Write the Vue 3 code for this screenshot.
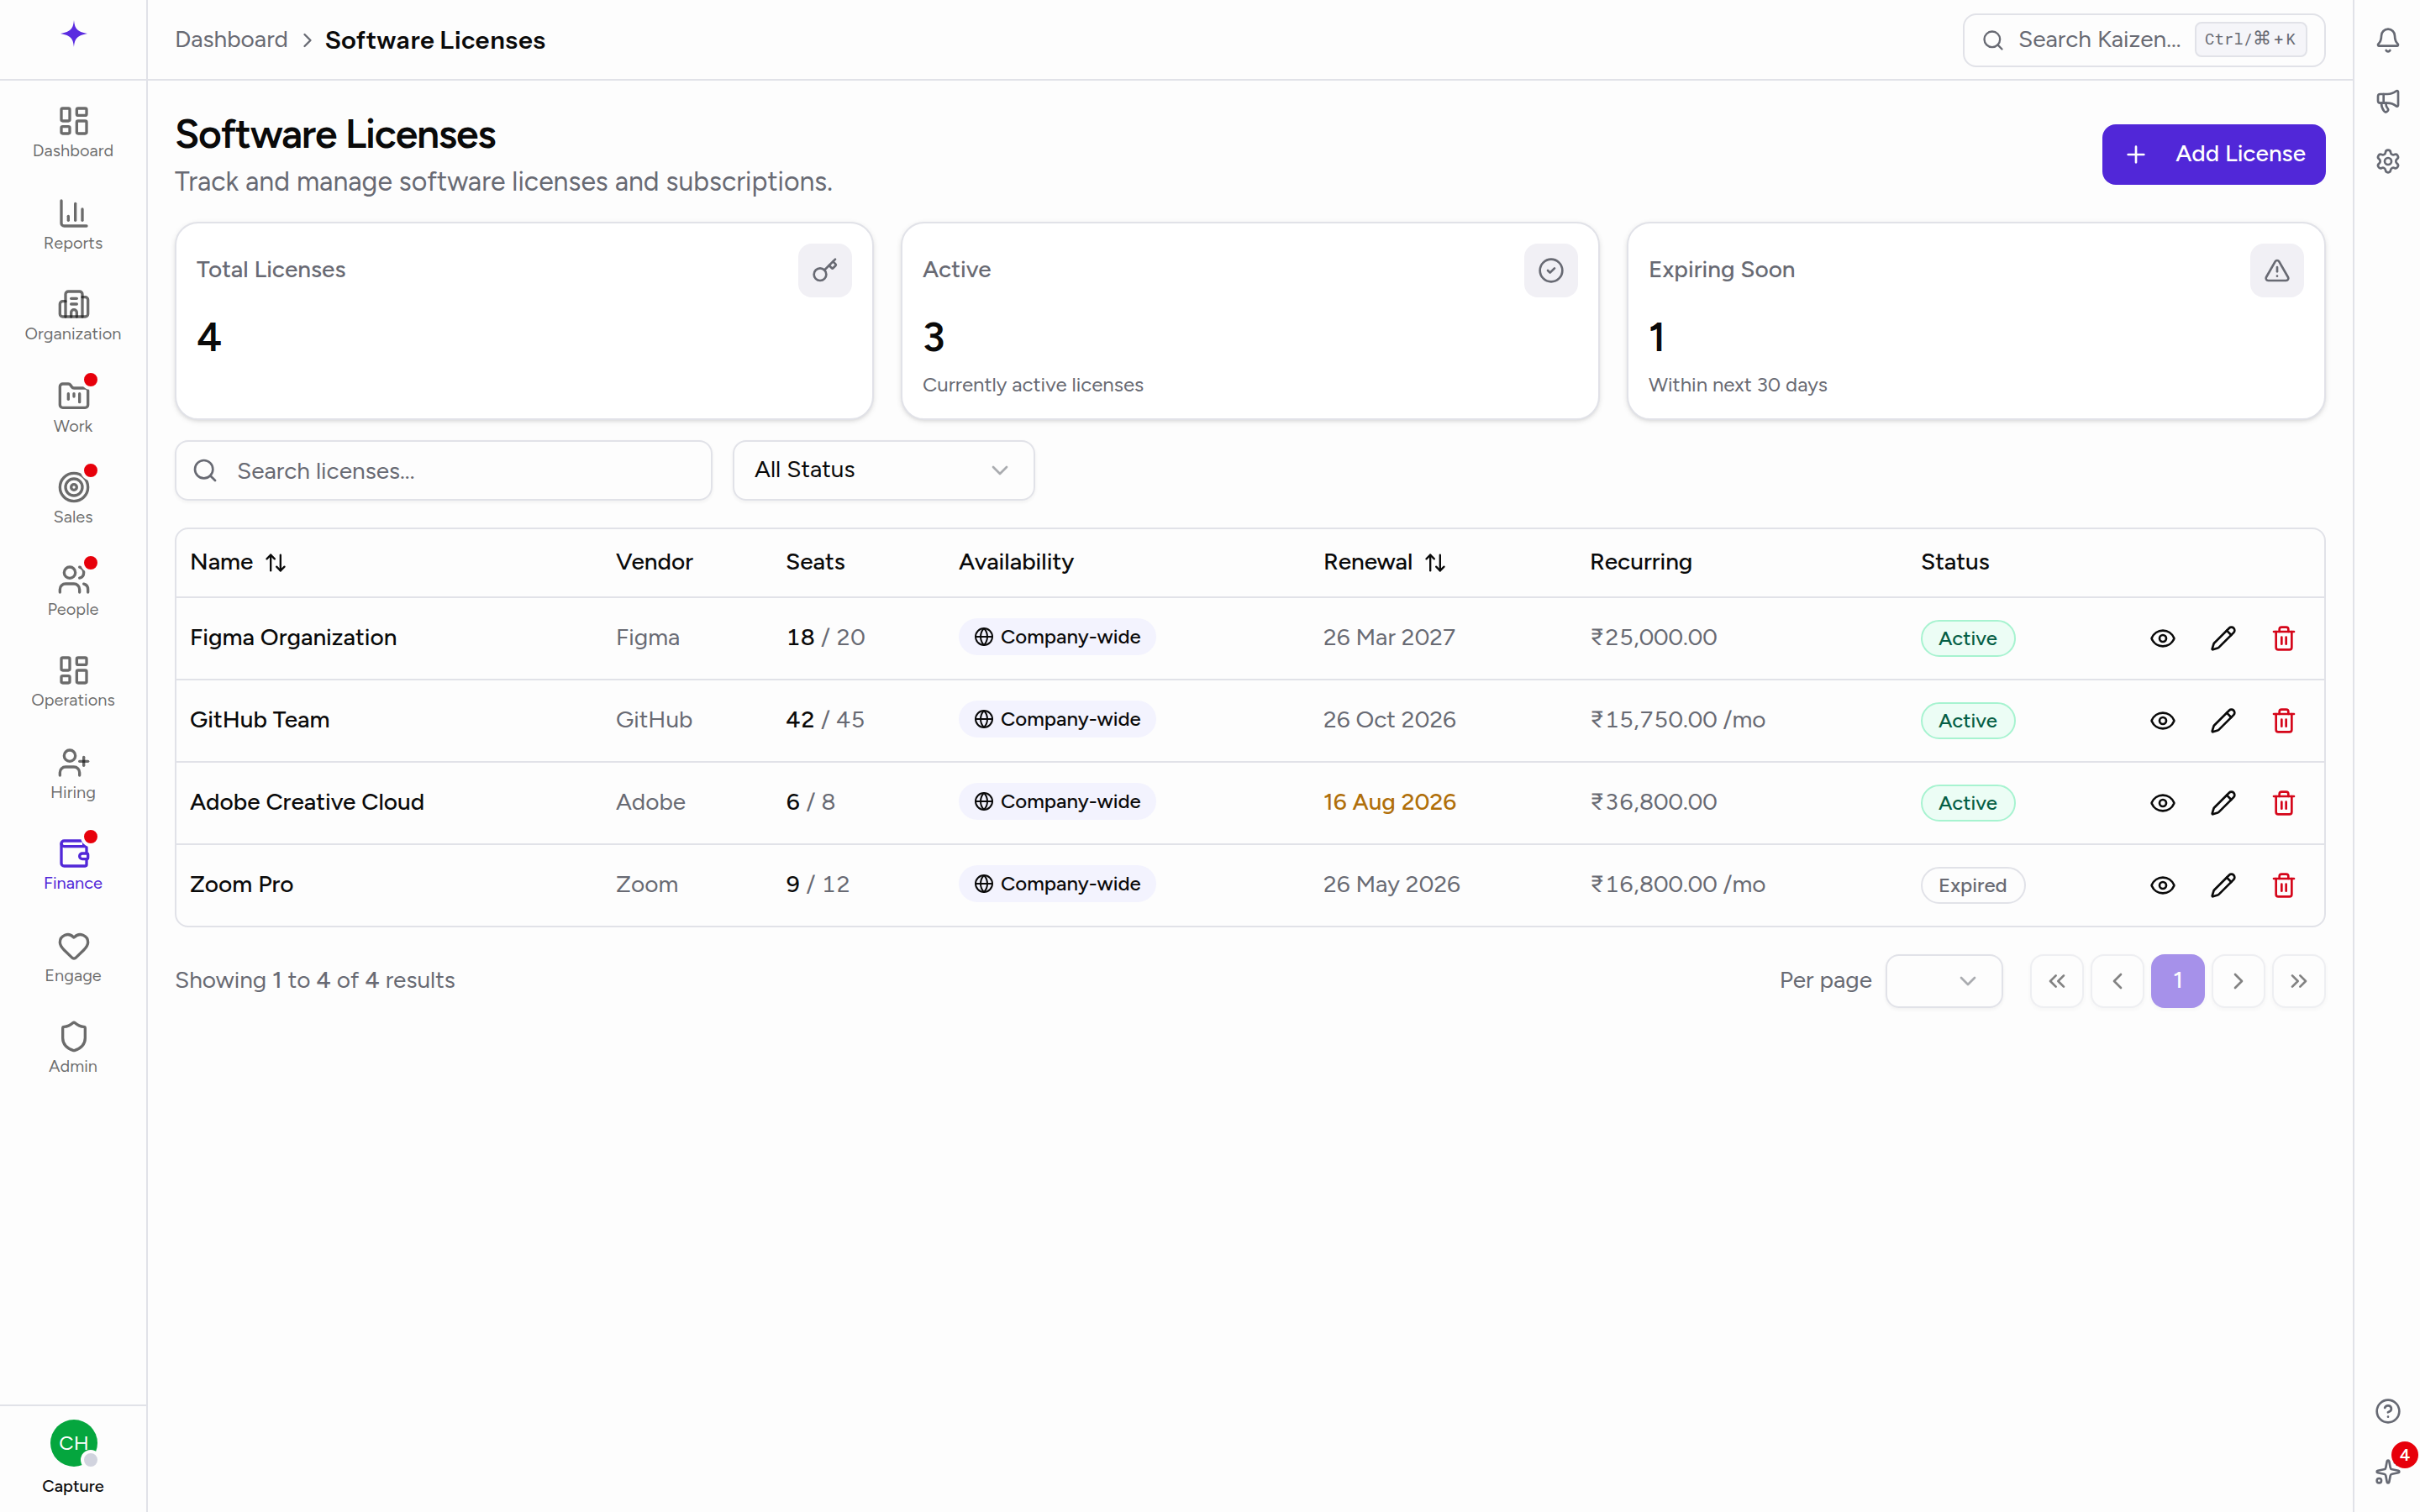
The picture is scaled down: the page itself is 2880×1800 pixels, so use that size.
<template>
  <div class="app">
    <!-- Sidebar -->
    <aside class="sidebar">
      <div class="brand">
        <svg class="brand-icon" viewBox="0 0 32 32">
          <path d="M16 0C17 10 19.500 13.600 32 16C19.500 18.400 17 22 16 32C15 22 12.500 18.400 0 16C12.500 13.600 15 10 16 0Z" />
        </svg>
      </div>

      <nav class="menu">
        <a v-for="item in menu" :key="item.label" class="menu-item" :class="{ active: item.active }">
          <span class="menu-icon">
            <svg class="icon" viewBox="0 0 24 24"><path v-for="d in icons[item.icon]" :key="d" :d="d" /></svg>
            <span v-if="item.dot" class="menu-dot"></span>
          </span>
          <span class="menu-label">{{ item.label }}</span>
        </a>
      </nav>

      <div class="user">
        <div class="avatar">
          <span>CH</span>
          <span class="presence"></span>
        </div>
        <span class="user-name">Capture</span>
      </div>
    </aside>

    <main class="main">
      <!-- Top bar -->
      <header class="topbar">
        <div class="breadcrumb">
          <span class="crumb">Dashboard</span>
          <svg class="icon crumb-sep" viewBox="0 0 24 24"><path d="m9 18 6-6-6-6" /></svg>
          <span class="crumb-current">Software Licenses</span>
        </div>
        <div class="global-search">
          <svg class="icon" viewBox="0 0 24 24"><path v-for="d in icons.search" :key="d" :d="d" /></svg>
          <span class="global-search-text">Search Kaizen...</span>
          <kbd class="kbd"><span>Ctrl/</span><span class="cmd">⌘</span><span class="plus">+</span><span>K</span></kbd>
        </div>
      </header>

      <section class="content">
        <div class="page-head">
          <div>
            <h1 class="title">Software Licenses</h1>
            <p class="subtitle">Track and manage software licenses and subscriptions.</p>
          </div>
          <button class="btn-primary">
            <svg class="icon" viewBox="0 0 24 24"><path d="M5 12h14M12 5v14" /></svg>
            <span>Add License</span>
          </button>
        </div>

        <!-- Summary cards -->
        <div class="cards">
          <div v-for="card in cards" :key="card.label" class="card">
            <div class="card-head">
              <span class="card-label">{{ card.label }}</span>
              <span class="card-icon">
                <svg class="icon" viewBox="0 0 24 24"><path v-for="d in icons[card.icon]" :key="d" :d="d" /></svg>
              </span>
            </div>
            <div class="card-value">{{ card.value }}</div>
            <div v-if="card.hint" class="card-hint">{{ card.hint }}</div>
          </div>
        </div>

        <!-- Filters -->
        <div class="filters">
          <div class="search-box">
            <svg class="icon" viewBox="0 0 24 24"><path v-for="d in icons.search" :key="d" :d="d" /></svg>
            <span>Search licenses...</span>
          </div>
          <div class="select status-select">
            <span>All Status</span>
            <svg class="icon chevron" viewBox="0 0 24 24"><path d="m6 9 6 6 6-6" /></svg>
          </div>
        </div>

        <!-- Licenses table -->
        <div class="table">
          <div class="row row-head">
            <div v-for="col in columns" :key="col.label" class="cell">
              <span>{{ col.label }}</span>
              <svg v-if="col.sortable" class="icon sort" viewBox="0 0 24 24">
                <path d="m21 16-4 4-4-4" /><path d="M17 20V4" /><path d="m3 8 4-4 4 4" /><path d="M7 4v16" />
              </svg>
            </div>
          </div>
          <div v-for="item in licenses" :key="item.name" class="row">
            <div class="cell name">{{ item.name }}</div>
            <div class="cell muted">{{ item.vendor }}</div>
            <div class="cell muted tabular">
              <span><span class="used">{{ item.used }}</span> / {{ item.seats }}</span>
            </div>
            <div class="cell">
              <span class="pill">
                <svg class="icon" viewBox="0 0 24 24"><path v-for="d in icons.globe" :key="d" :d="d" /></svg>
                <span>Company-wide</span>
              </span>
            </div>
            <div class="cell muted" :class="{ warn: item.soon }">{{ item.renewal }}</div>
            <div class="cell muted tabular">{{ item.price }}</div>
            <div class="cell cell-status">
              <span class="badge" :class="item.status.toLowerCase()">{{ item.status }}</span>
            </div>
            <div class="cell actions">
              <svg class="icon" viewBox="0 0 24 24"><path v-for="d in icons.eye" :key="d" :d="d" /></svg>
              <svg class="icon" viewBox="0 0 24 24"><path v-for="d in icons.pencil" :key="d" :d="d" /></svg>
              <svg class="icon danger" viewBox="0 0 24 24"><path v-for="d in icons.trash" :key="d" :d="d" /></svg>
            </div>
          </div>
        </div>

        <!-- Pagination -->
        <div class="pagination">
          <div class="showing">Showing <b>1</b> to <b>4</b> of <b>4</b> results</div>
          <div class="pager">
            <span class="per-page">Per page</span>
            <div class="select page-select">
              <svg class="icon chevron" viewBox="0 0 24 24"><path d="m6 9 6 6 6-6" /></svg>
            </div>
            <div class="pages">
              <button class="page-btn"><svg class="icon" viewBox="0 0 24 24"><path d="m11 17-5-5 5-5" /><path d="m18 17-5-5 5-5" /></svg></button>
              <button class="page-btn"><svg class="icon" viewBox="0 0 24 24"><path d="m15 18-6-6 6-6" /></svg></button>
              <button class="page-btn current">1</button>
              <button class="page-btn"><svg class="icon" viewBox="0 0 24 24"><path d="m9 18 6-6-6-6" /></svg></button>
              <button class="page-btn"><svg class="icon" viewBox="0 0 24 24"><path d="m6 17 5-5-5-5" /><path d="m13 17 5-5-5-5" /></svg></button>
            </div>
          </div>
        </div>
      </section>
    </main>

    <!-- Right rail -->
    <aside class="rail">
      <div class="rail-group">
        <svg v-for="name in railIcons" :key="name" class="icon" viewBox="0 0 24 24">
          <path v-for="d in icons[name]" :key="d" :d="d" />
        </svg>
      </div>
      <div class="rail-group">
        <svg class="icon" viewBox="0 0 24 24"><path v-for="d in icons.help" :key="d" :d="d" /></svg>
        <span class="assistant">
          <svg class="icon" viewBox="0 0 24 24"><path v-for="d in icons.sparkles" :key="d" :d="d" /></svg>
          <span class="count">4</span>
        </span>
      </div>
    </aside>
  </div>
</template>

<script setup>
const circle = (x, y, r) => `M${x - r} ${y}a${r} ${r} 0 1 0 ${r * 2} 0a${r} ${r} 0 1 0 ${-r * 2} 0`

const icons = {
  grid: [
    'M4 3h4a1 1 0 0 1 1 1v7a1 1 0 0 1-1 1H4a1 1 0 0 1-1-1V4a1 1 0 0 1 1-1z',
    'M15 3h5a1 1 0 0 1 1 1v3a1 1 0 0 1-1 1h-5a1 1 0 0 1-1-1V4a1 1 0 0 1 1-1z',
    'M15 12h5a1 1 0 0 1 1 1v7a1 1 0 0 1-1 1h-5a1 1 0 0 1-1-1v-7a1 1 0 0 1 1-1z',
    'M4 16h4a1 1 0 0 1 1 1v3a1 1 0 0 1-1 1H4a1 1 0 0 1-1-1v-3a1 1 0 0 1 1-1z',
  ],
  chart: ['M3 3v16a2 2 0 0 0 2 2h16', 'M18 17V9', 'M13 17V5', 'M8 17v-3'],
  building: [
    'M10 12h4', 'M10 8h4', 'M14 21v-3a2 2 0 0 0-4 0v3',
    'M6 10H4a2 2 0 0 0-2 2v7a2 2 0 0 0 2 2h16a2 2 0 0 0 2-2V9a2 2 0 0 0-2-2h-2',
    'M6 21V5a2 2 0 0 1 2-2h8a2 2 0 0 1 2 2v16',
  ],
  folder: [
    'M4 20h16a2 2 0 0 0 2-2V8a2 2 0 0 0-2-2h-7.93a2 2 0 0 1-1.66-.9l-.82-1.2A2 2 0 0 0 7.930 3H4a2 2 0 0 0-2 2v13c0 1.100.9 2 2 2Z',
    'M8 10v4', 'M12 10v2', 'M16 10v6',
  ],
  target: [circle(12, 12, 10), circle(12, 12, 6), circle(12, 12, 2)],
  users: ['M16 21v-2a4 4 0 0 0-4-4H6a4 4 0 0 0-4 4v2', 'M16 3.128a4 4 0 0 1 0 7.744', 'M22 21v-2a4 4 0 0 0-3-3.870', circle(9, 7, 4)],
  userPlus: ['M16 21v-2a4 4 0 0 0-4-4H6a4 4 0 0 0-4 4v2', circle(9, 7, 4), 'M19 8v6', 'M22 11h-6'],
  wallet: [
    'M19 7V4a1 1 0 0 0-1-1H5a2 2 0 0 0 0 4h15a1 1 0 0 1 1 1v4h-3a2 2 0 0 0 0 4h3a1 1 0 0 0 1-1v-2a1 1 0 0 0-1-1',
    'M3 5v14a2 2 0 0 0 2 2h15a1 1 0 0 0 1-1v-4',
  ],
  heart: ['M2 9.500a5.500 5.500 0 0 1 9.591-3.676.560.560 0 0 0 .818 0A5.490 5.490 0 0 1 22 9.500c0 2.290-1.500 4-3 5.500l-5.492 5.313a2 2 0 0 1-3 .019L5 15c-1.500-1.500-3-3.200-3-5.500'],
  shield: ['M20 13c0 5-3.500 7.500-7.660 8.950a1 1 0 0 1-.67-.01C7.500 20.500 4 18 4 13V6a1 1 0 0 1 1-1c2 0 4.500-1.200 6.240-2.720a1.170 1.170 0 0 1 1.520 0C14.510 3.810 17 5 19 5a1 1 0 0 1 1 1z'],
  search: ['m21 21-4.340-4.340', circle(11, 11, 8)],
  key: ['m15.500 7.500 2.300 2.300a1 1 0 0 0 1.400 0l2.100-2.100a1 1 0 0 0 0-1.400L19 4', 'm21 2-9.600 9.600', circle(7.5, 15.5, 5.5)],
  check: [circle(12, 12, 10), 'm9 12 2 2 4-4'],
  alert: ['m21.730 18-8-14a2 2 0 0 0-3.480 0l-8 14A2 2 0 0 0 4 21h16a2 2 0 0 0 1.730-3', 'M12 9v4', 'M12 17h.01'],
  globe: [circle(12, 12, 10), 'M12 2a14.500 14.500 0 0 0 0 20 14.500 14.500 0 0 0 0-20', 'M2 12h20'],
  eye: ['M2.062 12.348a1 1 0 0 1 0-.696 10.750 10.750 0 0 1 19.876 0 1 1 0 0 1 0 .696 10.750 10.750 0 0 1-19.876 0', circle(12, 12, 3)],
  pencil: [
    'M21.174 6.812a1 1 0 0 0-3.986-3.987L3.842 16.174a2 2 0 0 0-.5.830l-1.321 4.352a.5.5 0 0 0 .623.622l4.353-1.320a2 2 0 0 0 .830-.497z',
    'm15 5 4 4',
  ],
  trash: ['M10 11v6', 'M14 11v6', 'M19 6v14a2 2 0 0 1-2 2H7a2 2 0 0 1-2-2V6', 'M3 6h18', 'M8 6V4a2 2 0 0 1 2-2h4a2 2 0 0 1 2 2v2'],
  bell: [
    'M10.268 21a2 2 0 0 0 3.464 0',
    'M3.262 15.326A1 1 0 0 0 4 17h16a1 1 0 0 0 .740-1.673C19.410 13.956 18 12.499 18 8A6 6 0 0 0 6 8c0 4.499-1.411 5.956-2.738 7.326',
  ],
  megaphone: [
    'M11 6a13 13 0 0 0 8.400-2.800A1 1 0 0 1 21 4v12a1 1 0 0 1-1.600.8A13 13 0 0 0 11 14H5a2 2 0 0 1-2-2V8a2 2 0 0 1 2-2z',
    'M6 14a12 12 0 0 0 2.400 7.200 2 2 0 0 0 3.200-2.400A8 8 0 0 1 10 14', 'M8 6v8',
  ],
  settings: [
    'M9.671 4.136a2.340 2.340 0 0 1 4.659 0 2.340 2.340 0 0 0 3.319 1.915 2.340 2.340 0 0 1 2.330 4.033 2.340 2.340 0 0 0 0 3.831 2.340 2.340 0 0 1-2.330 4.033 2.340 2.340 0 0 0-3.319 1.915 2.340 2.340 0 0 1-4.659 0 2.340 2.340 0 0 0-3.320-1.915 2.340 2.340 0 0 1-2.330-4.033 2.340 2.340 0 0 0 0-3.831A2.340 2.340 0 0 1 6.350 6.051a2.340 2.340 0 0 0 3.319-1.915',
    circle(12, 12, 3),
  ],
  help: [circle(12, 12, 10), 'M9.090 9a3 3 0 0 1 5.830 1c0 2-3 3-3 3', 'M12 17h.01'],
  sparkles: [
    'M11.017 2.814a1 1 0 0 1 1.966 0l1.051 5.558a2 2 0 0 0 1.594 1.594l5.558 1.051a1 1 0 0 1 0 1.966l-5.558 1.051a2 2 0 0 0-1.594 1.594l-1.051 5.558a1 1 0 0 1-1.966 0l-1.051-5.558a2 2 0 0 0-1.594-1.594l-5.558-1.051a1 1 0 0 1 0-1.966l5.558-1.051a2 2 0 0 0 1.594-1.594z',
    'M20 2v4', 'M22 4h-4', circle(4, 20, 2),
  ],
}

const railIcons = ['bell', 'megaphone', 'settings']

const menu = [
  { label: 'Dashboard', icon: 'grid' },
  { label: 'Reports', icon: 'chart' },
  { label: 'Organization', icon: 'building' },
  { label: 'Work', icon: 'folder', dot: true },
  { label: 'Sales', icon: 'target', dot: true },
  { label: 'People', icon: 'users', dot: true },
  { label: 'Operations', icon: 'grid' },
  { label: 'Hiring', icon: 'userPlus' },
  { label: 'Finance', icon: 'wallet', dot: true, active: true },
  { label: 'Engage', icon: 'heart' },
  { label: 'Admin', icon: 'shield' },
]

const cards = [
  { label: 'Total Licenses', value: 4, icon: 'key' },
  { label: 'Active', value: 3, icon: 'check', hint: 'Currently active licenses' },
  { label: 'Expiring Soon', value: 1, icon: 'alert', hint: 'Within next 30 days' },
]

const columns = [
  { label: 'Name', sortable: true },
  { label: 'Vendor' },
  { label: 'Seats' },
  { label: 'Availability' },
  { label: 'Renewal', sortable: true },
  { label: 'Recurring' },
  { label: 'Status' },
]

const licenses = [
  { name: 'Figma Organization', vendor: 'Figma', used: 18, seats: 20, renewal: '26 Mar 2027', price: '₹25,000.00', status: 'Active' },
  { name: 'GitHub Team', vendor: 'GitHub', used: 42, seats: 45, renewal: '26 Oct 2026', price: '₹15,750.00 /mo', status: 'Active' },
  { name: 'Adobe Creative Cloud', vendor: 'Adobe', used: 6, seats: 8, renewal: '16 Aug 2026', price: '₹36,800.00', status: 'Active', soon: true },
  { name: 'Zoom Pro', vendor: 'Zoom', used: 9, seats: 12, renewal: '26 May 2026', price: '₹16,800.00 /mo', status: 'Expired' },
]
</script>

<style>
body {
  background: #fdfdfd;
}
</style>

<style scoped>
.app {
  display: flex;
  width: 2880px;
  height: 1800px;
  overflow: hidden;
  background: #fdfdfd;
  color: #0a0a0a;
  font-family: Figtree, Lato, 'Open Sans', sans-serif;
  font-size: 28px;
  line-height: 40px;
}

.app * {
  box-sizing: border-box;
}

.icon {
  width: 32px;
  height: 32px;
  flex: none;
  fill: none;
  stroke: currentColor;
  stroke-width: 2;
  stroke-linecap: round;
  stroke-linejoin: round;
}

/* SIDEBAR */
.sidebar {
  display: flex;
  flex-direction: column;
  flex: none;
  width: 176px;
  border-right: 2px solid #e1e2e8;
}

.brand {
  display: flex;
  justify-content: center;
  height: 96px;
  padding: 24px 0 0 2px;
  border-bottom: 2px solid #e1e2e8;
}

.brand-icon {
  width: 32px;
  height: 32px;
  fill: #5a2be0;
}

.menu {
  display: flex;
  flex-direction: column;
  flex: 1;
  padding-top: 28px;
}

.menu-item {
  display: flex;
  flex-direction: column;
  align-items: center;
  gap: 2px;
  height: 110px;
  color: rgba(10, 10, 10, 0.6);
}

.menu-item:nth-child(even) {
  height: 108px;
}

.menu-item.active {
  color: #5127d8;
}

.menu-icon {
  position: relative;
  height: 40px;
  margin-left: 2px;
}

.menu-icon .icon {
  width: 40px;
  height: 40px;
}

.menu-dot {
  position: absolute;
  top: -12px;
  right: -12px;
  width: 24px;
  height: 24px;
  border: 4px solid #fdfdfd;
  border-radius: 50%;
  background: #e7000b;
}

.menu-label {
  font-size: 20px;
  line-height: 26px;
}

.user {
  display: flex;
  flex-direction: column;
  align-items: center;
  gap: 10px;
  height: 128px;
  padding-top: 16px;
  border-top: 2px solid #e1e2e8;
}

.avatar {
  position: relative;
  display: flex;
  align-items: center;
  justify-content: center;
  width: 56px;
  height: 56px;
  margin-left: 2px;
  border-radius: 50%;
  background: #05a63e;
  color: #fff;
  font-size: 24px;
}

.presence {
  position: absolute;
  right: -4px;
  bottom: -4px;
  width: 24px;
  height: 24px;
  border: 4px solid #fdfdfd;
  border-radius: 50%;
  background: #d1d3de;
}

.user-name {
  font-size: 20px;
  line-height: 26px;
  font-weight: 500;
}

/* MAIN */
.main {
  flex: 1;
  min-width: 0;
}

.topbar {
  display: flex;
  align-items: center;
  justify-content: space-between;
  height: 96px;
  padding: 2px 32px 0;
  border-bottom: 2px solid #e1e2e8;
}

.breadcrumb {
  display: flex;
  align-items: center;
}

.crumb {
  padding-bottom: 4px;
  color: #686a73;
}

.crumb-sep {
  width: 28px;
  height: 28px;
  margin: 0 7px 0 9px;
  color: #686a73;
}

.crumb-current {
  font-family: 'Instrument Sans', Figtree, sans-serif;
  font-size: 29px;
  font-weight: 600;
  letter-spacing: 0.75px;
}

.global-search {
  display: flex;
  align-items: center;
  width: 432px;
  height: 64px;
  padding: 0 20px;
  border: 2px solid #e1e2e8;
  border-radius: 16px;
  color: #686a73;
}

.global-search .icon {
  width: 28px;
  height: 28px;
}

.global-search-text {
  flex: 1;
  padding: 0 0 4px 16px;
}

.kbd {
  display: flex;
  align-items: center;
  width: 134px;
  height: 42px;
  margin-top: -2px;
  padding: 0 0 2px 10px;
  border: 2px solid #e1e2e8;
  border-radius: 8px;
  background: #f5f5f9;
  font: 19px/26px 'Roboto Mono', 'DejaVu Sans Mono', monospace;
}

.cmd {
  width: 20px;
  font: 22px/26px 'DejaVu Sans', sans-serif;
  text-align: center;
}

.plus {
  margin: 0 3px 0 5px;
}

.content {
  padding: 32px;
}

.page-head {
  display: flex;
  align-items: center;
  justify-content: space-between;
  height: 112px;
}

.title {
  margin: -1px 0 1px;
  font-size: 48px;
  line-height: 64px;
  font-weight: 600;
  letter-spacing: -1.2px;
}

.subtitle {
  margin: 0;
  color: #686a73;
  font-size: 32px;
  line-height: 48px;
}

.btn-primary {
  display: flex;
  align-items: center;
  justify-content: space-between;
  width: 266px;
  height: 72px;
  padding: 0 24px;
  border: 0;
  border-radius: 16px;
  background: #5127d8;
  color: #fff;
  font: 500 28px/40px Figtree, Lato, sans-serif;
  white-space: nowrap;
}

.btn-primary span {
  padding-bottom: 4px;
}

/* CARDS */
.cards {
  display: grid;
  grid-template-columns: repeat(3, 1fr);
  gap: 32px;
  margin-top: 24px;
}

.card {
  height: 236px;
  padding: 24px;
  border: 2px solid #e1e2e8;
  border-radius: 28px;
  background: #fff;
  box-shadow: 0 2px 6px rgba(0, 0, 0, 0.1), 0 2px 4px -2px rgba(0, 0, 0, 0.1);
}

.card-head {
  display: flex;
  align-items: center;
  justify-content: space-between;
}

.card-label {
  padding-bottom: 4px;
  color: #686a73;
  font-weight: 500;
}

.card-icon {
  display: flex;
  align-items: center;
  justify-content: center;
  width: 64px;
  height: 64px;
  border-radius: 16px;
  background: #f1f0f5;
  color: #686a73;
}

.card-value {
  margin-top: 15px;
  font-size: 48px;
  line-height: 64px;
  font-weight: 600;
}

.card-hint {
  margin-top: 9px;
  color: #686a73;
  font-size: 24px;
  line-height: 32px;
}

/* FILTERS */
.filters {
  display: flex;
  gap: 24px;
  margin-top: 24px;
}

.search-box,
.select {
  display: flex;
  align-items: center;
  height: 72px;
  border: 2px solid #e1e2e8;
  border-radius: 16px;
  box-shadow: 0 2px 4px rgba(0, 0, 0, 0.05);
}

.search-box {
  gap: 22px;
  width: 640px;
  padding: 0 18px;
  color: #686a73;
}

.status-select {
  justify-content: space-between;
  width: 360px;
  padding: 0 24px;
}

.status-select span {
  padding-bottom: 4px;
}

.chevron {
  color: #686a73;
  opacity: 0.55;
}

/* TABLE */
.table {
  margin-top: 32px;
  border: 2px solid #e1e2e8;
  border-radius: 16px;
}

.row {
  display: grid;
  grid-template-columns: 507px 202px 206px 434px 317px 394px 1fr auto;
  height: 98px;
  border-bottom: 2px solid #e1e2e8;
}

.row:last-child {
  height: 96px;
  border-bottom: 0;
}

.row-head {
  height: 82px;
  font-weight: 500;
}

.cell {
  display: flex;
  align-items: center;
  padding: 0 16px 4px;
}

.name,
.used,
.warn {
  font-weight: 500;
}

.used {
  color: #0a0a0a;
}

.muted {
  color: #686a73;
}

.muted.warn {
  color: #b06f0a;
}

.tabular {
  font-variant-numeric: tabular-nums;
}

.sort {
  width: 28px;
  height: 28px;
  margin: 4px 0 0 13px;
}

.pill {
  display: flex;
  align-items: center;
  gap: 8px;
  height: 44px;
  padding: 0 18px;
  border-radius: 22px;
  background: #f3f3fe;
  font-size: 24px;
  line-height: 32px;
  font-weight: 500;
}

.pill .icon {
  width: 24px;
  height: 24px;
}

.cell-status {
  padding-bottom: 0;
}

.badge {
  height: 44px;
  padding: 0 20px 0 19px;
  border: 2px solid #e1e2e8;
  border-radius: 22px;
  color: #686a73;
  font-size: 24px;
  line-height: 40px;
  font-weight: 500;
}

.badge.active {
  border-color: #a7f3d0;
  background: #ecfdf5;
  color: #065f46;
}

.actions {
  gap: 40px;
  padding: 0 32px;
}

.danger {
  color: #d5061a;
}

/* PAGINATION */
.pagination {
  display: flex;
  align-items: center;
  justify-content: space-between;
  margin-top: 32px;
  color: #686a73;
}

.showing,
.per-page {
  padding-bottom: 4px;
}

.showing b {
  font-weight: 500;
}

.pager,
.pages {
  display: flex;
  align-items: center;
}

.page-select {
  justify-content: flex-end;
  width: 140px;
  height: 64px;
  margin: 0 32px 0 16px;
  padding: 0 24px;
}

.pages {
  gap: 8px;
}

.page-btn {
  display: flex;
  align-items: center;
  justify-content: center;
  width: 64px;
  height: 64px;
  padding: 0;
  border: 2px solid #e1e2e8;
  border-radius: 16px;
  background: #fdfdfd;
  box-shadow: 0 2px 4px rgba(0, 0, 0, 0.05);
  color: #0a0a0a;
  opacity: 0.5;
}

.page-btn.current {
  padding-bottom: 4px;
  border: 0;
  background: #5127d8;
  color: #fff;
  font: 500 28px/40px Figtree, Lato, sans-serif;
}

/* RIGHT RAIL */
.rail {
  display: flex;
  flex-direction: column;
  justify-content: space-between;
  flex: none;
  width: 80px;
  padding: 32px 0;
  border-left: 2px solid #e1e2e8;
  color: #666973;
}

.rail-group {
  display: flex;
  flex-direction: column;
  align-items: center;
  gap: 40px;
  padding-left: 2px;
}

.assistant {
  position: relative;
  height: 32px;
}

.count {
  position: absolute;
  top: -20px;
  right: -20px;
  width: 32px;
  height: 32px;
  border-radius: 50%;
  background: #e7000b;
  color: #fff;
  font-size: 20px;
  line-height: 32px;
  font-weight: 600;
  text-align: center;
}
</style>
